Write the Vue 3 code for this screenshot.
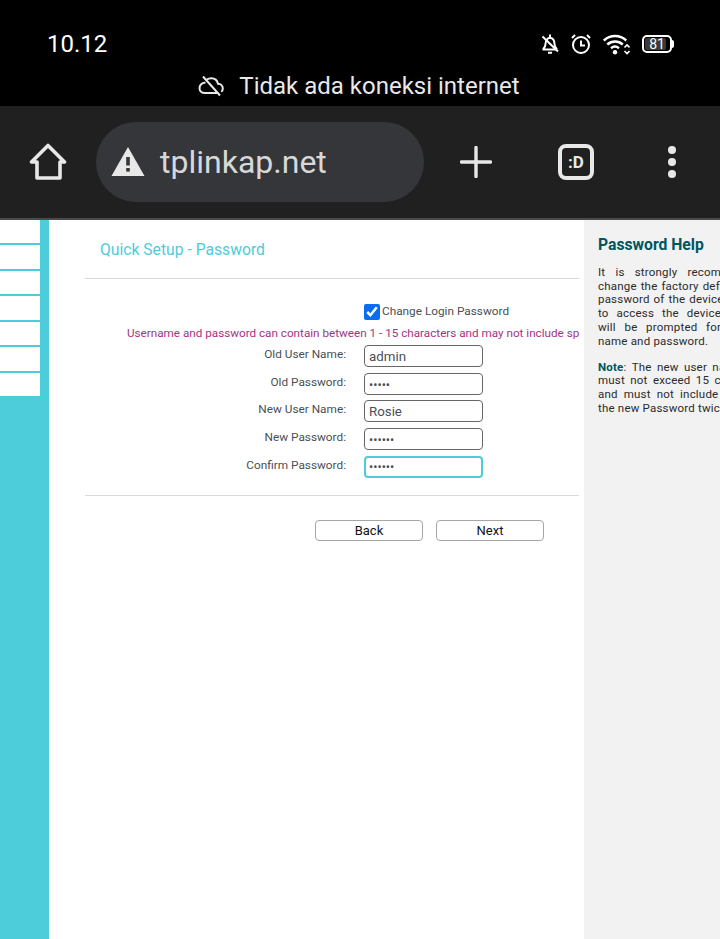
<script setup>
const fields = [
  { label: 'Old User Name:', type: 'text', value: 'admin' },
  { label: 'Old Password:', type: 'password', value: 'admin' },
  { label: 'New User Name:', type: 'text', value: 'Rosie' },
  { label: 'New Password:', type: 'password', value: 'rosie1' },
  { label: 'Confirm Password:', type: 'password', value: 'rosie1', focus: true }
]

const menuItems = [1, 2, 3, 4, 5, 6, 7]

const helpLines = [
  'It is strongly recommended that you',
  'change the factory default user name and',
  'password of the device, because all users',
  'to access the device\'s Web-based tool',
  'will be prompted for the default user'
]

const noteLines = [
  'must not exceed 15 characters in length',
  'and must not include any spaces. Enter'
]
</script>

<template>
  <div class="screen">
    <div class="status">
      <div class="status-top">
        <span class="time">10.12</span>
        <div class="status-icons">
          <svg width="18" height="22" viewBox="0 0 18 22" fill="none" stroke="#fff" stroke-width="2">
            <path d="M1.500 16.500h14.500M2 16.500c1.500-1.500 2.500-3 2.500-5.500 0-3 1.700-5.800 4.500-6.200 2.800.4 4.500 3 4.500 6.200 0 2.500 1 4 2.500 5.500" />
            <path d="M9 1.500v3M7 19.800h4" />
            <path d="M1.500 3.500 17 18.500" />
          </svg>
          <svg width="20" height="22" viewBox="0 0 20 22" fill="none" stroke="#fff" stroke-width="2">
            <circle cx="10" cy="12" r="8" />
            <path d="M10 7.500v5h4M1 5l3-3M19 5l-3-3" />
          </svg>
          <svg width="27" height="22" viewBox="0 0 27 22" fill="none" stroke="#fff" stroke-width="2.400">
            <path d="M.8 7.500c6.500-6 16-6 22.500 0M4.300 11.500c4.500-4 11-4 15.500 0M8 15.200c2.500-2 5.500-2 8 0" />
            <circle cx="12" cy="19.300" r="2.200" fill="#fff" stroke="none" />
            <path d="M21.500 14.500l2.500-2.500 2.500 2.500M21.500 18l2.500 2.500 2.500-2.500" stroke-width="1.600" />
          </svg>
          <div class="battery">
            <div class="battery-body"><span class="battery-level"></span><span class="battery-num">81</span></div>
            <span class="battery-tip"></span>
          </div>
        </div>
      </div>
      <div class="offline">
        <svg width="26" height="22" viewBox="0 0 26 22" fill="none" stroke="#e8e8e8" stroke-width="2">
          <path d="M7.500 7.500C4 8 1.500 10.300 1.500 13.200c0 2.800 2.400 4.800 5.500 4.800h12.500M8.500 4.800C10 3.700 11.500 3.200 13.300 3.200c3.400 0 6 2.300 6.700 5.500 2.800.2 4.800 2.200 4.800 4.700 0 1.300-.5 2.500-1.500 3.300" />
          <path d="M5 1.500 22 20.500" />
        </svg>
        <span>Tidak ada koneksi internet</span>
      </div>
    </div>

    <div class="toolbar">
      <svg class="home" width="38" height="38" viewBox="0 0 38 38" fill="none" stroke="#e8e8e8" stroke-width="3.600" stroke-linejoin="round">
        <path d="M2.500 19 19 2.500 35.500 19H31v16H8V19z" />
      </svg>
      <div class="omnibox">
        <svg width="34" height="30" viewBox="0 0 34 30">
          <path d="M17 0 33.500 29H.5z" fill="#e8e8e8" />
          <rect x="15.200" y="10" width="3.600" height="8.500" fill="#35363a" />
          <rect x="15.200" y="21" width="3.600" height="3.600" fill="#35363a" />
        </svg>
        <span>tplinkap.net</span>
      </div>
      <svg class="plus" width="32" height="32" viewBox="0 0 32 32" stroke="#e8e8e8" stroke-width="3.400" stroke-linecap="round">
        <path d="M16 1.500v29M1.500 16h29" />
      </svg>
      <div class="tabs">:D</div>
      <div class="dots"><i></i><i></i><i></i></div>
    </div>

    <div class="page">
      <aside class="side">
        <div class="side-list">
          <div class="side-item" v-for="n in menuItems" :key="n"></div>
        </div>
      </aside>

      <main class="main">
        <div class="main-in">
          <h1 class="title">Quick Setup - Password</h1>
          <hr class="rule" />
          <label class="change">
            <input type="checkbox" checked />
            <span>Change Login Password</span>
          </label>
          <p class="warn">Username and password can contain between 1 - 15 characters and may not include spaces.</p>
          <div class="form">
            <div class="row" v-for="f in fields" :key="f.label">
              <span class="label">{{ f.label }}</span>
              <input class="field" :class="[f.type, { focus: f.focus }]" :type="f.type" :value="f.value" readonly />
            </div>
          </div>
          <hr class="rule rule-low" />
          <div class="buttons">
            <button class="btn">Back</button>
            <button class="btn">Next</button>
          </div>
        </div>
      </main>

      <aside class="help">
        <div class="help-in">
          <h2>Password Help</h2>
          <div class="help-p">
            <div class="line" v-for="l in helpLines" :key="l">{{ l }}</div>
            <div>name and password.</div>
          </div>
          <div class="help-p">
            <div class="line"><b>Note</b>: The new user name and password</div>
            <div class="line" v-for="l in noteLines" :key="l">{{ l }}</div>
            <div>the new Password twice to confirm it.</div>
          </div>
        </div>
      </aside>
    </div>
  </div>
</template>

<style scoped>
.screen {
  width: 720px;
  height: 939px;
  overflow: hidden;
  display: flex;
  flex-direction: column;
  font-family: Roboto, "Liberation Sans", sans-serif;
  background: #fff;
}

.status {
  height: 106px;
  background: #000;
  color: #fff;
  flex: none;
}

.status-top {
  height: 66px;
  padding: 22px 46px 0 47px;
  box-sizing: border-box;
  display: flex;
  justify-content: space-between;
  align-items: center;
}

.time {
  font-size: 24px;
}

.status-icons {
  display: flex;
  align-items: center;
  gap: 12px;
}

.battery {
  display: flex;
  align-items: center;
}

.battery-body {
  position: relative;
  width: 26px;
  height: 14px;
  border: 2px solid #fff;
  border-radius: 5px;
  font-size: 14px;
  line-height: 14px;
  text-align: center;
}

.battery-level {
  position: absolute;
  left: 1px;
  top: 1px;
  bottom: 1px;
  width: 21px;
  background: #3a3a3a;
  border-radius: 2px;
}

.battery-num {
  position: relative;
}

.battery-tip {
  width: 2px;
  height: 8px;
  background: #fff;
  border-radius: 0 2px 2px 0;
}

.offline {
  height: 40px;
  display: flex;
  align-items: center;
  justify-content: center;
  gap: 15px;
  color: #e8e8e8;
  font-size: 24px;
  padding-right: 2px;
}

.toolbar {
  height: 112px;
  flex: none;
  background: #202020;
  border-bottom: 2px solid #4a4a4a;
  display: flex;
  align-items: center;
}

.home {
  margin-left: 29px;
  flex: none;
}

.omnibox {
  margin-left: 29px;
  width: 328px;
  height: 80px;
  flex: none;
  background: #35363a;
  border-radius: 40px;
  display: flex;
  align-items: center;
  gap: 15px;
  padding-left: 15px;
  box-sizing: border-box;
  color: #d8d8d8;
  font-size: 32px;
}

.plus {
  margin-left: 36px;
  flex: none;
}

.tabs {
  margin-left: 66px;
  width: 36px;
  height: 36px;
  flex: none;
  box-sizing: border-box;
  border: 4px solid #e8e8e8;
  border-radius: 8px;
  color: #e8e8e8;
  font-size: 17px;
  font-weight: 700;
  text-align: center;
  line-height: 28px;
}

.dots {
  margin-left: 74px;
  display: flex;
  flex-direction: column;
  gap: 4px;
}

.dots i {
  width: 8px;
  height: 8px;
  border-radius: 50%;
  background: #e8e8e8;
  display: block;
}

.page {
  flex: 1;
  display: flex;
  min-height: 0;
}

.side {
  width: 49px;
  flex: none;
  background: #4dcdd9;
  padding-right: 9px;
  box-sizing: border-box;
}

.side-list {
  display: flex;
  flex-direction: column;
  gap: 2px;
}

.side-item {
  height: 23.430px;
  background: #fff;
}

.main {
  width: 535px;
  flex: none;
  padding-left: 36px;
  box-sizing: border-box;
}

.main-in {
  width: 494px;
  height: 100%;
  overflow: hidden;
}

.title {
  margin: 20px 0 0 15px;
  font-size: 15.700px;
  line-height: 20px;
  font-weight: 400;
  color: #4dcdd9;
}

.rule {
  margin: 18px 0 0;
  border: 0;
  height: 1px;
  background: #d9d9d9;
}

.change {
  display: flex;
  align-items: flex-start;
  margin: 25px 0 0 279px;
  height: 16px;
  font-size: 11.800px;
  line-height: 14px;
  color: #4a4f55;
}

.change input {
  width: 16px;
  height: 16px;
  margin: 0 2px 0 0;
  accent-color: #0a6cf0;
}

.warn {
  margin: 6px 0 0 42px;
  font-size: 11.700px;
  line-height: 15px;
  white-space: nowrap;
  color: #a8327f;
}

.form {
  margin-top: 4px;
}

.row {
  height: 27.700px;
  display: flex;
}

.label {
  width: 261px;
  margin-right: 18px;
  text-align: right;
  font-size: 11.800px;
  line-height: 18px;
  color: #4a4f55;
}

.field {
  width: 119px;
  height: 22px;
  box-sizing: border-box;
  border: 1px solid #666;
  border-radius: 4px;
  padding: 1px 4px 0;
  font-family: inherit;
  font-size: 13.300px;
  color: #4a4f55;
  outline: none;
}

.field.password {
  font-size: 12.500px;
}

.field.focus {
  border: 2px solid #4dcdd9;
  padding: 0 3px;
}

.rule-low {
  margin-top: 12px;
}

.buttons {
  margin: 24px 0 0 230px;
  display: flex;
  gap: 13px;
}

.btn {
  width: 108px;
  height: 21px;
  padding: 0;
  background: #fff;
  border: 1px solid #a6a6a6;
  border-radius: 4px;
  font-family: inherit;
  font-size: 13px;
  color: #111;
}

.help {
  flex: 1;
  background: #f2f2f2;
  overflow: hidden;
  min-width: 0;
}

.help-in {
  width: 226px;
  padding: 15px 0 0 14px;
}

.help h2 {
  margin: 0 0 11px;
  font-size: 15.700px;
  line-height: 20px;
  font-weight: 700;
  color: #00565f;
}

.help-p {
  margin: 0 0 12.500px;
  font-size: 11.500px;
  line-height: 13.700px;
  letter-spacing: 0.2px;
  color: #2b2b2b;
}

.line {
  text-align: justify;
  text-align-last: justify;
  white-space: normal;
}

.help b {
  color: #00565f;
}
</style>
